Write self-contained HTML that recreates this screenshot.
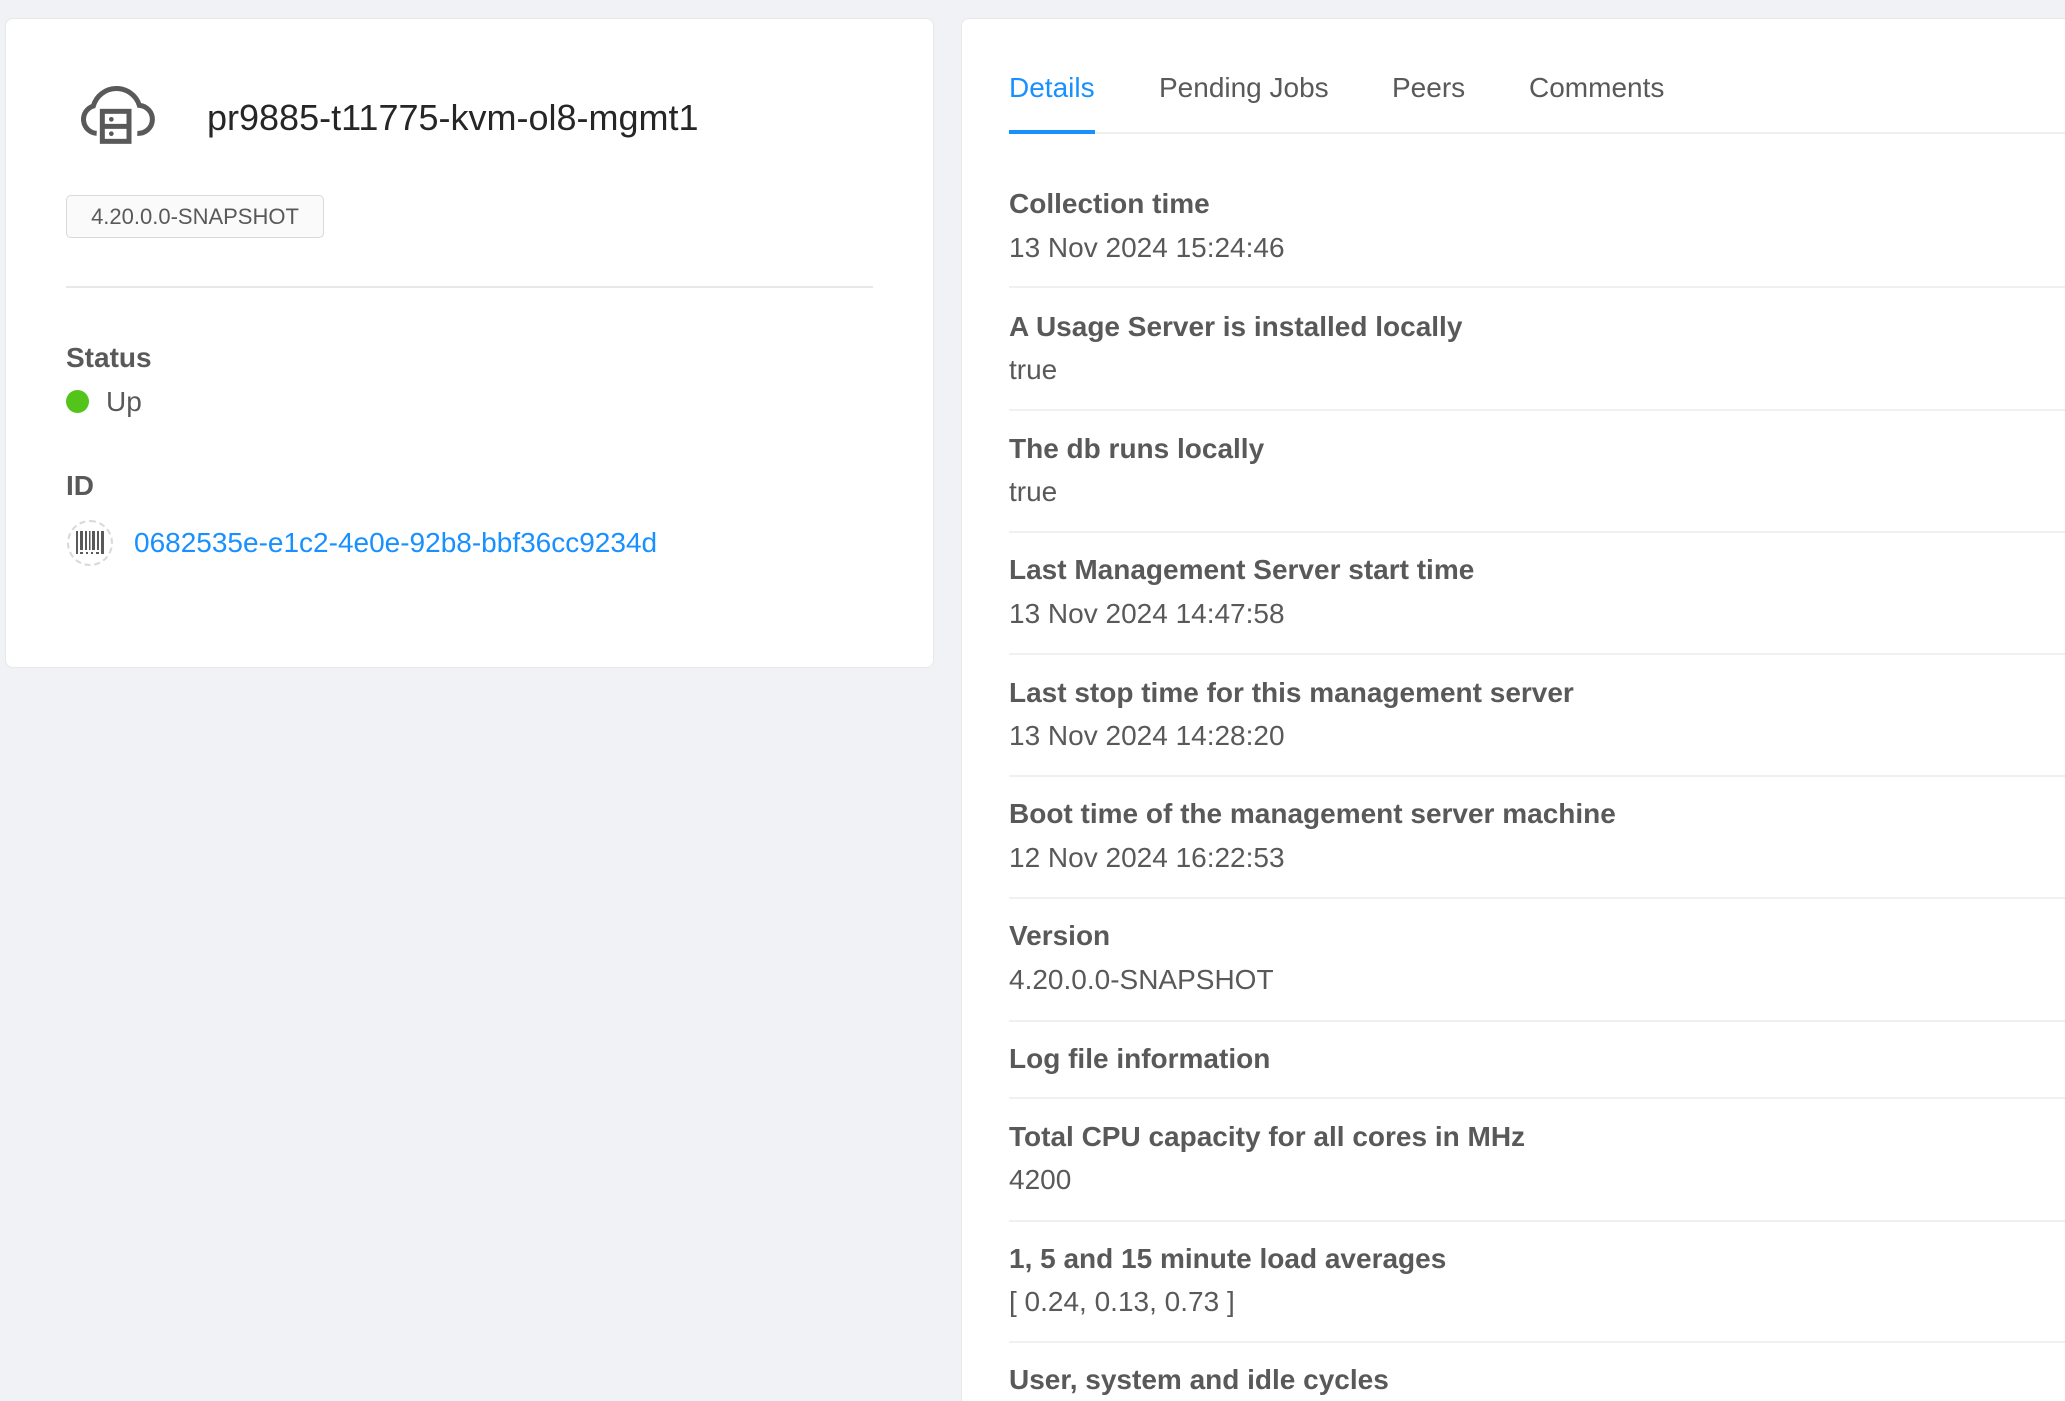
<!DOCTYPE html>
<html><head><meta charset="utf-8"><style>
*{margin:0;padding:0;box-sizing:border-box}
html,body{width:2065px;height:1401px;overflow:hidden}
body{background:#f0f2f5;font-family:"Liberation Sans",Arial,sans-serif;position:relative;color:#595959}
.card{position:absolute;background:#fff;border:1px solid #e8e8e8;border-radius:8px}
.a{position:absolute;white-space:nowrap;line-height:40px}
.lb{font-weight:bold;font-size:28px;color:#595959}
.vl{font-size:28px;color:#595959}
.sep{position:absolute;left:1009px;right:0;height:2px;background:#f0f0f0}
.tab{position:absolute;top:68px;font-size:28px;line-height:40px;color:#595959}
</style></head><body>
<div class="card" style="left:5px;top:18px;width:929px;height:650px"></div>
<div class="card" style="left:961px;top:18px;width:1120px;height:1390px;border-right:none;border-bottom:none;border-radius:8px 0 0 0"></div>

<svg style="position:absolute;left:60px;top:70px" width="110" height="90" viewBox="0 0 330 270">
<g fill="none" stroke="#595959" stroke-width="15">
<path d="M110,190 A42,42 0 0 1 100,108 A72,72 0 0 1 238,106 A42,42 0 0 1 232,190"/>
<rect x="127" y="124" width="80" height="90"/>
<line x1="127" y1="169" x2="207" y2="169"/>
</g>
<circle cx="154" cy="148" r="7" fill="#595959"/><circle cx="154" cy="191" r="7" fill="#595959"/>
</svg>
<div class="a" style="left:207px;top:96px;font-size:36px;line-height:44px;color:#262626">pr9885-t11775-kvm-ol8-mgmt1</div>
<div class="a" style="left:66px;top:195px;width:258px;height:43px;border:1px solid #d9d9d9;border-radius:5px;background:#fafafa;font-size:22px;line-height:41px;text-align:center;color:#595959">4.20.0.0-SNAPSHOT</div>
<div style="position:absolute;left:66px;top:286px;width:807px;height:2px;background:#e8e8e8"></div>
<div class="a lb" style="left:66px;top:338px">Status</div>
<div style="position:absolute;left:66px;top:390px;width:23px;height:23px;border-radius:50%;background:#52c41a"></div>
<div class="a vl" style="left:106px;top:382px">Up</div>
<div class="a lb" style="left:66px;top:466px">ID</div>
<div style="position:absolute;left:67px;top:520px;width:46px;height:46px;border-radius:50%;border:2px dashed #d9d9d9"></div>
<svg style="position:absolute;left:76px;top:531px" width="28" height="23" viewBox="0 0 28 23" fill="#595959">
<rect x="0" y="0" width="2" height="23"/><rect x="4" y="0" width="3" height="19"/><rect x="9" y="0" width="2" height="19"/><rect x="13" y="0" width="1.5" height="19"/><rect x="16" y="0" width="3" height="19"/><rect x="21" y="0" width="2" height="19"/><rect x="25" y="0" width="3" height="23"/>
<rect x="4" y="21" width="3" height="2"/><rect x="10" y="21" width="2" height="2"/><rect x="15" y="21" width="2" height="2"/><rect x="20" y="21" width="3" height="2"/>
</svg>
<div class="a" style="left:134px;top:523px;font-size:28px;color:#1890ff">0682535e-e1c2-4e0e-92b8-bbf36cc9234d</div>

<div class="tab" style="left:1009px;color:#1890ff">Details</div>
<div class="tab" style="left:1159px">Pending Jobs</div>
<div class="tab" style="left:1392px">Peers</div>
<div class="tab" style="left:1529px">Comments</div>
<div style="position:absolute;left:1009px;right:0;top:132px;height:2px;background:#f0f0f0"></div>
<div style="position:absolute;left:1009px;width:86px;top:130px;height:4px;background:#1890ff"></div>

<div class="a lb" style="left:1009px;top:184px">Collection time</div>
<div class="a vl" style="left:1009px;top:228px">13 Nov 2024 15:24:46</div>
<div class="sep" style="top:286px"></div>
<div class="a lb" style="left:1009px;top:307px">A Usage Server is installed locally</div>
<div class="a vl" style="left:1009px;top:350px">true</div>
<div class="sep" style="top:409px"></div>
<div class="a lb" style="left:1009px;top:429px">The db runs locally</div>
<div class="a vl" style="left:1009px;top:472px">true</div>
<div class="sep" style="top:531px"></div>
<div class="a lb" style="left:1009px;top:550px">Last Management Server start time</div>
<div class="a vl" style="left:1009px;top:594px">13 Nov 2024 14:47:58</div>
<div class="sep" style="top:653px"></div>
<div class="a lb" style="left:1009px;top:673px">Last stop time for this management server</div>
<div class="a vl" style="left:1009px;top:716px">13 Nov 2024 14:28:20</div>
<div class="sep" style="top:775px"></div>
<div class="a lb" style="left:1009px;top:794px">Boot time of the management server machine</div>
<div class="a vl" style="left:1009px;top:838px">12 Nov 2024 16:22:53</div>
<div class="sep" style="top:897px"></div>
<div class="a lb" style="left:1009px;top:916px">Version</div>
<div class="a vl" style="left:1009px;top:960px">4.20.0.0-SNAPSHOT</div>
<div class="sep" style="top:1020px"></div>
<div class="a lb" style="left:1009px;top:1039px">Log file information</div>
<div class="sep" style="top:1097px"></div>
<div class="a lb" style="left:1009px;top:1117px">Total CPU capacity for all cores in MHz</div>
<div class="a vl" style="left:1009px;top:1160px">4200</div>
<div class="sep" style="top:1220px"></div>
<div class="a lb" style="left:1009px;top:1239px">1, 5 and 15 minute load averages</div>
<div class="a vl" style="left:1009px;top:1282px">[ 0.24, 0.13, 0.73 ]</div>
<div class="sep" style="top:1341px"></div>
<div class="a lb" style="left:1009px;top:1360px">User, system and idle cycles</div>
</body></html>
